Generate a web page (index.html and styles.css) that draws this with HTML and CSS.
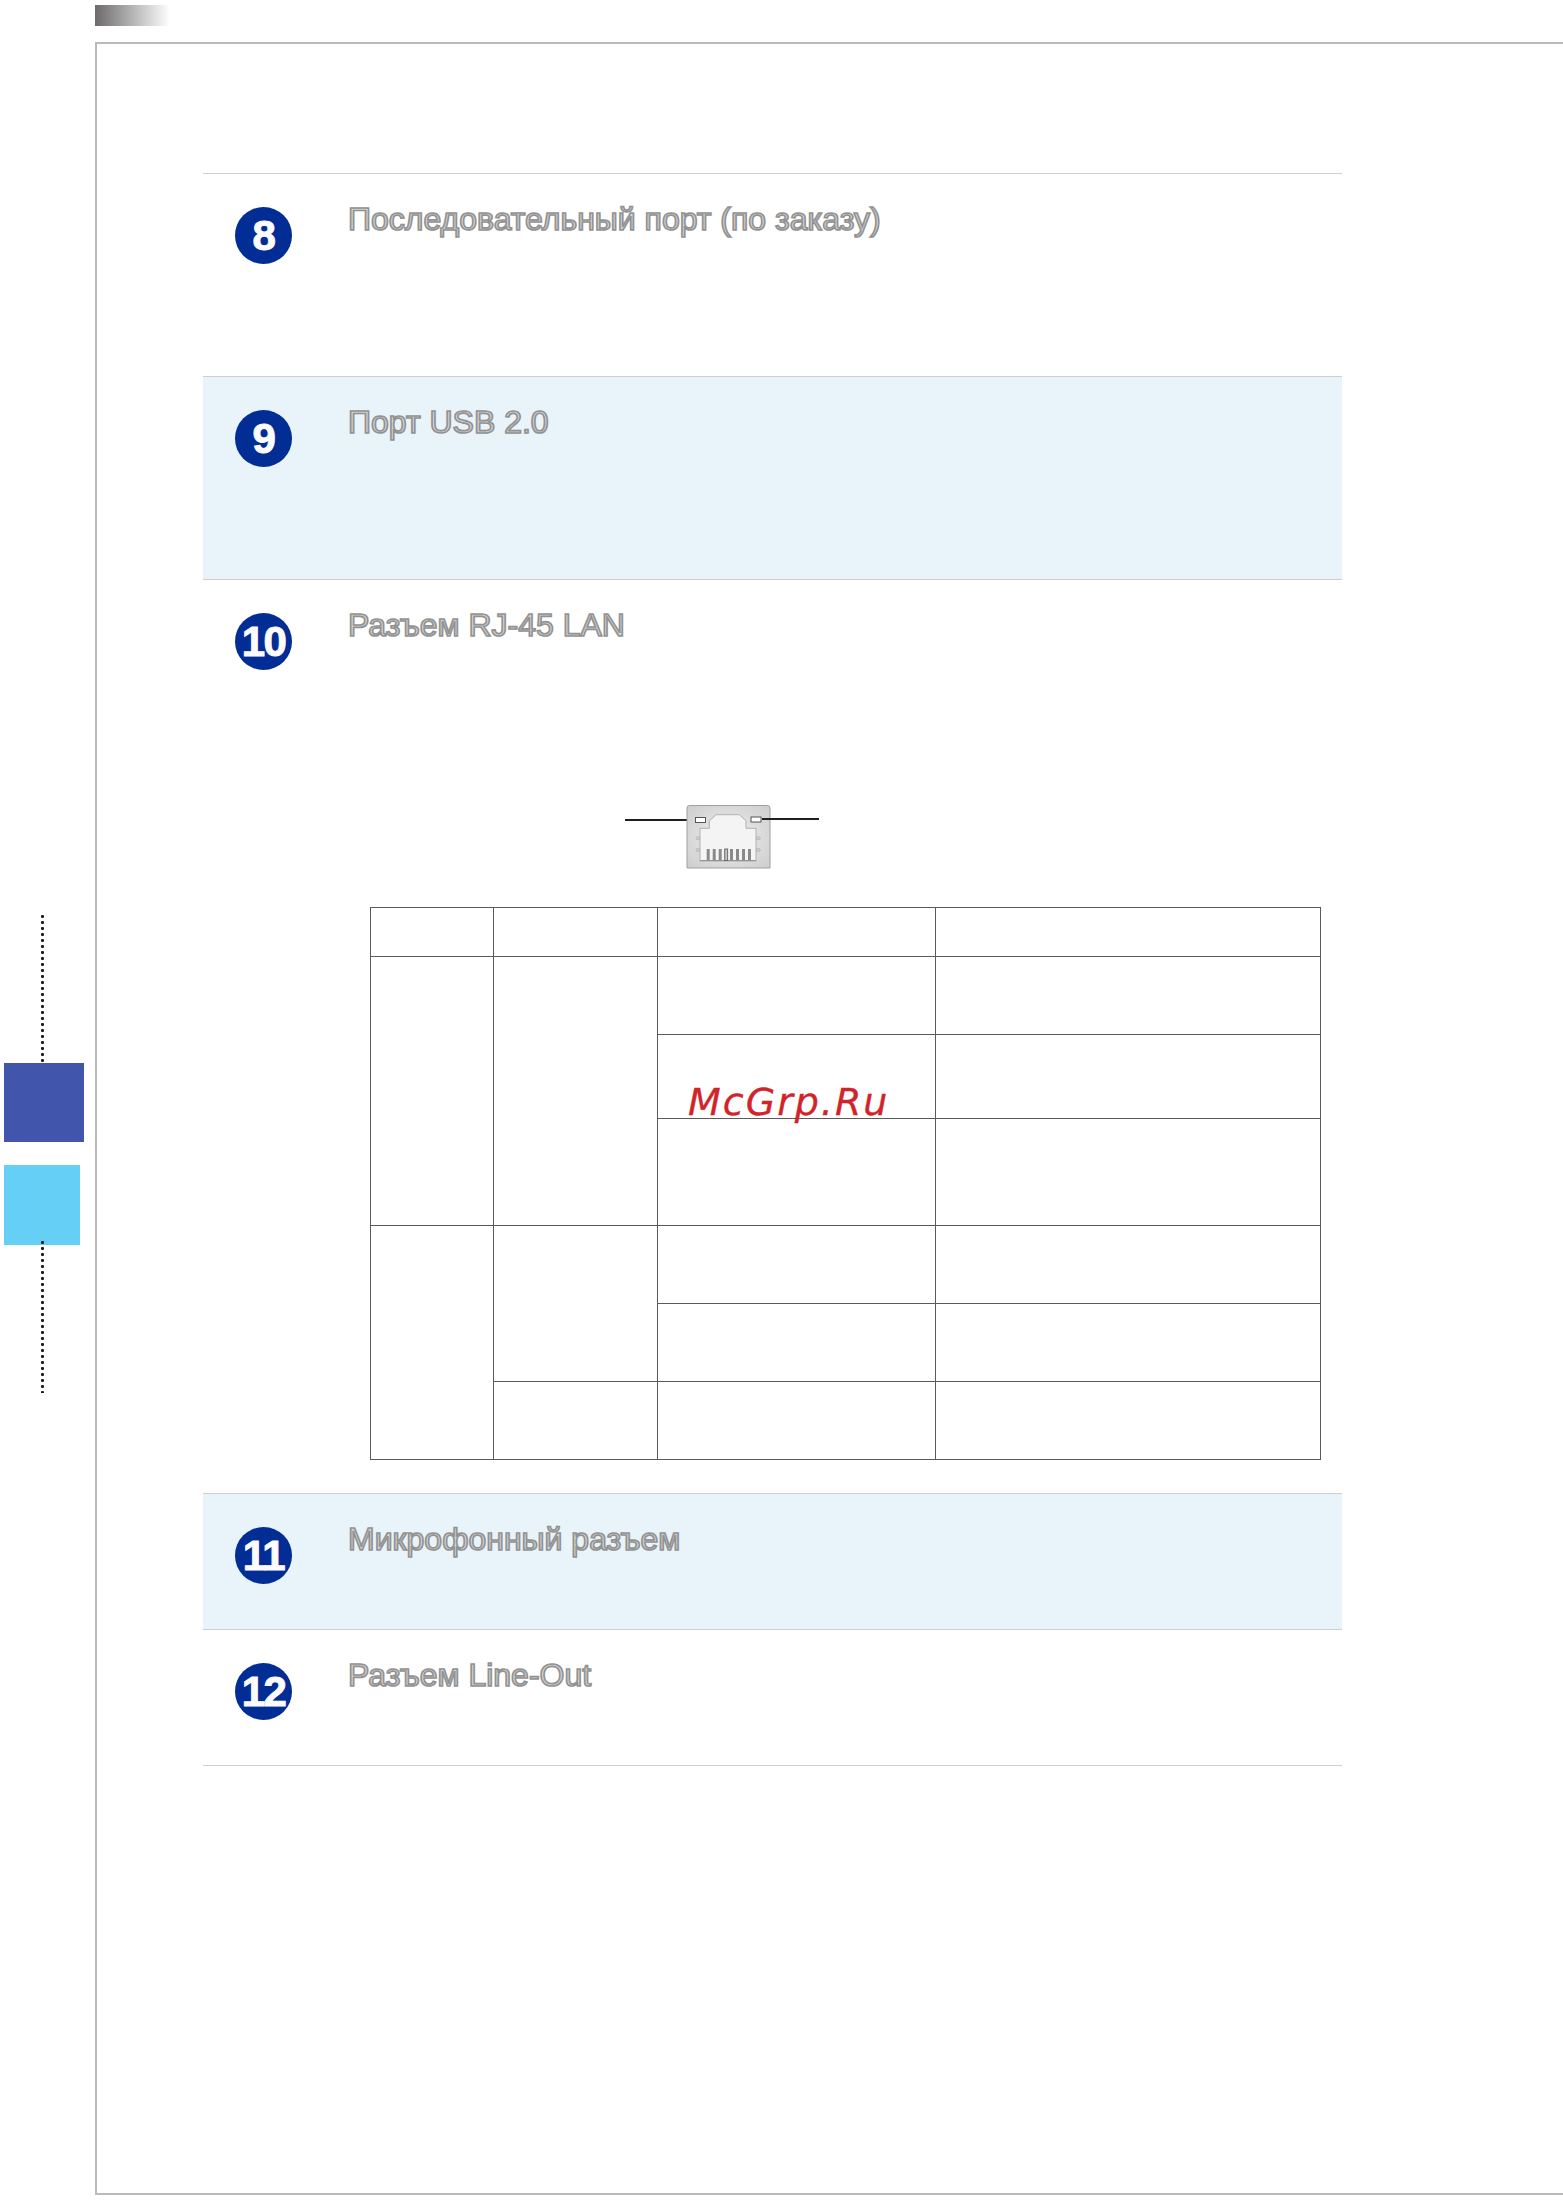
FILE: index.html
```html
<!DOCTYPE html>
<html lang="ru">
<head>
<meta charset="utf-8">
<title>Разъемы</title>
<link rel="stylesheet" href="styles.css">
</head>
<body>
<div class="tab"></div>
<aside class="side">
  <div class="dots dots-top"></div>
  <div class="sq-blue"></div>
  <div class="sq-cyan"></div>
  <div class="dots dots-bottom"></div>
</aside>
<main class="frame">
  <section class="item h-203">
    <div class="num">8</div>
    <h2 class="title">Последовательный порт (по заказу)</h2>
  </section>
  <section class="item h-203 tint">
    <div class="num">9</div>
    <h2 class="title">Порт USB 2.0</h2>
  </section>
  <section class="item h-914">
    <div class="num">10</div>
    <div class="body">
      <h2 class="title">Разъем RJ-45 LAN</h2>
      <div class="jack">
        <div class="lead"></div>
        <svg class="jack-svg" width="85" height="65" viewBox="0 0 85 65">
          <defs>
            <radialGradient id="jg" cx="50%" cy="50%" r="70%">
              <stop offset="0" stop-color="#efefef"/>
              <stop offset="1" stop-color="#cdcdcd"/>
            </radialGradient>
          </defs>
          <path d="M3.500 1.500H81.500Q84 1.500 84 4V64H1V4Q1 1.500 3.500 1.500Z" fill="url(#jg)" stroke="#a0a0a0"/>
          <path d="M14 56.700V24.300H23.300V17L30 10.700H53.300L60 16.700V24.300H70V56.700Z" fill="#f4f4f4" stroke="#b0b0b0"/>
          <path d="M14 56.700H70" stroke="#8c8c8c" fill="none"/>
          <g fill="#cfcfcf" stroke="#a8a8a8" stroke-width=".6">
            <ellipse cx="12" cy="34.300" rx="2" ry="1.500"/>
            <ellipse cx="12" cy="46" rx="2" ry="1.500"/>
            <ellipse cx="72.300" cy="34.300" rx="2" ry="1.500"/>
            <ellipse cx="72.300" cy="46" rx="2" ry="1.500"/>
          </g>
          <g fill="#8a8a8a">
            <rect x="20.700" y="45" width="3" height="11.500"/>
            <rect x="26.700" y="45" width="3" height="11.500"/>
            <rect x="32.700" y="45" width="3" height="11.500"/>
            <rect x="38.700" y="45" width="3" height="11.500" fill="#c0c0c0" stroke="#555" stroke-width=".8"/>
            <rect x="44" y="45" width="3" height="11.500"/>
            <rect x="50" y="45" width="3" height="11.500"/>
            <rect x="56" y="45" width="3" height="11.500"/>
            <rect x="62" y="45" width="3" height="11.500"/>
          </g>
          <rect x="9.500" y="13.500" width="10" height="5" fill="#fff" stroke="#555"/>
          <rect x="65" y="13" width="10" height="5" fill="#fff" stroke="#555"/>
        </svg>
        <div class="lead lead-r"></div>
      </div>
      <table class="grid">
        <colgroup><col class="c1"><col class="c2"><col class="c3"><col class="c4"></colgroup>
        <tr class="r49"><td></td><td></td><td></td><td></td></tr>
        <tr class="r78"><td rowspan="3"></td><td rowspan="3"></td><td></td><td></td></tr>
        <tr class="r84"><td></td><td></td></tr>
        <tr class="r107"><td></td><td></td></tr>
        <tr class="r78"><td rowspan="3"></td><td rowspan="2"></td><td></td><td></td></tr>
        <tr class="r78"><td></td><td></td></tr>
        <tr class="r78"><td></td><td></td><td></td></tr>
      </table>
    </div>
  </section>
  <section class="item h-136 tint">
    <div class="num">11</div>
    <h2 class="title">Микрофонный разъем</h2>
  </section>
  <section class="item last">
    <div class="num">12</div>
    <h2 class="title">Разъем Line-Out</h2>
  </section>
</main>
<div class="mark">McGrp.Ru</div>
</body>
</html>
```
FILE: styles.css
```css
* { box-sizing: border-box; }
html, body { margin: 0; padding: 0; background: #fff; }
body { width: 1563px; height: 2201px; overflow: hidden; position: relative; font-family: "Liberation Sans", Arial, sans-serif; }

.tab { width: 75px; height: 21px; margin: 5px 0 0 95px; background: linear-gradient(90deg, #6c6a6b, #fff); }

.frame {
  margin: 16px 0 0 95px;
  height: 2153px;
  border: solid #bababa;
  border-width: 2px 0 2px 2px;
  padding: 129px 0 0 106px;
}

.item {
  width: 1139px;
  display: flex;
  align-items: flex-start;
  border-top: 1px solid #cfcfcf;
  padding: 33px 0 0 32px;
}
.h-203 { height: 203px; }
.h-914 { height: 914px; }
.h-136 { height: 136px; }
.last { height: 137px; border-bottom: 1px solid #cfcfcf; }
.tint { background: #e8f3fa; }

.num {
  flex: none;
  width: 57px;
  height: 57px;
  border-radius: 50%;
  background: #012d95;
  color: #fdfbfe;
  font-size: 42px;
  font-weight: 700;
  line-height: 57px;
  text-align: center;
  letter-spacing: -1.500px;
  -webkit-text-stroke: 1px #fdfbfe;
}

.title {
  margin: -8px 0 0 56px;
  font-size: 32px;
  line-height: 40px;
  font-weight: 400;
  color: #d8d8d8;
  -webkit-text-stroke: 1.700px #929292;
  white-space: nowrap;
}
.body { flex: none; }

.jack { display: flex; align-items: flex-start; margin: 159px 0 0 333px; }
.lead { width: 70px; height: 2px; background: #231f20; margin: 15px -9px 0 0; }
.lead-r { width: 57px; margin: 14px 0 0 -9px; }
.jack-svg { display: block; flex: none; }

.grid { border-collapse: collapse; table-layout: fixed; width: 950px; margin: 38px 0 0 78px; }
.grid td { border: 1px solid #5a5a5a; padding: 0; }
.c1 { width: 123px; }
.c2 { width: 164px; }
.c3 { width: 278px; }
.c4 { width: 385px; }
.r49 { height: 49px; }
.r78 { height: 78px; }
.r84 { height: 84px; }
.r107 { height: 107px; }

.side { position: absolute; left: 4px; top: 915px; width: 80px; }
.dots {
  width: 3px;
  margin-left: 37px;
  background-image: radial-gradient(circle at 1.500px 1.500px, #1c1c1c 1.300px, transparent 1.700px);
  background-size: 3px 6px;
}
.dots-top { height: 148px; }
.dots-bottom { height: 152px; margin-top: -4px; }
.sq-blue { width: 80px; height: 79px; background: #4255ad; }
.sq-cyan { width: 76px; height: 80px; margin-top: 23px; background: #66cff6; }

.mark {
  position: absolute;
  left: 688px;
  top: 1080px;
  font-family: "DejaVu Sans", sans-serif;
  font-style: italic;
  font-size: 38px;
  line-height: 45px;
  letter-spacing: 2px;
  color: #d2232a;
  -webkit-text-stroke: .3px #d2232a;
}
```
